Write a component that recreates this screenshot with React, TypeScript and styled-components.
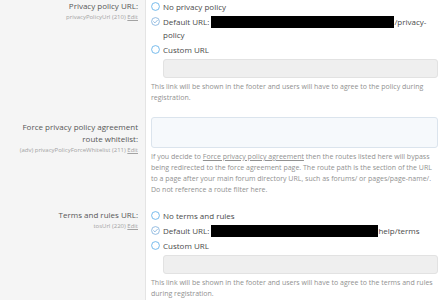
import styled, { createGlobalStyle } from "styled-components";

const GlobalStyle = createGlobalStyle`
html, body {
margin: 0;
padding: 0;
background: #fff;
}
body {
font-family: "Open Sans", "Noto Sans", sans-serif;
color: #444;
}
`;

const Page = styled.div`
width: 444px;
height: 300px;
overflow: hidden;
`;

const Row = styled.div`
display: grid;
grid-template-columns: 146px 1fr;
`;

const Term = styled.div<{ $first?: boolean; $offset?: number }>`
background: #f5f5f5;
border-right: 1px solid #e4e4e4;
padding: ${(p) => (p.$first ? 0 : 7) + (p.$offset || 0)}px 7px 7px 8px;
text-align: right;
`;

const Label = styled.div`
font-size: 8px;
line-height: 12px;
color: #575757;
`;

const Hint = styled.div`
font-size: 6px;
line-height: 10px;
color: #a3a3a3;
a {
color: inherit;
text-decoration: underline;
}
`;

const Desc = styled.div<{ $first?: boolean }>`
padding: ${(p) => (p.$first ? 0 : 7)}px 6px 7px 5px;
display: flex;
flex-direction: column;
`;

const RadioList = styled.div`
display: flex;
flex-direction: column;
gap: 2px;
`;

const RadioItem = styled.div`
display: flex;
align-items: flex-start;
gap: 3px;
font-size: 8px;
line-height: 13px;
color: #4a4a4a;
`;

const RadioIcon = styled.span`
flex: none;
width: 9px;
height: 13px;
display: flex;
align-items: center;
`;

const RadioText = styled.span`
flex: 1;
min-width: 0;
`;

const Redacted = styled.span<{ $w: number }>`
display: inline-block;
width: ${(p) => p.$w}px;
height: 12px;
background: #000;
vertical-align: -3px;
`;

const Indented = styled.div`
padding-left: 12px;
margin-top: 3px;
`;

const FieldInput = styled.div`
height: 19px;
box-sizing: border-box;
background: #efefef;
border: 1px solid #e2e2e2;
border-radius: 3px;
`;

const FieldArea = styled.div`
height: 31px;
box-sizing: border-box;
background: #f6f9fc;
border: 1px solid #dbe4ed;
border-radius: 3px;
`;

const Explain = styled.div`
margin-top: 3px;
font-size: 7px;
line-height: 11px;
color: #919191;
a {
color: inherit;
text-decoration: underline;
}
`;

const Radio = ({ checked }: { checked?: boolean }) => (
  <RadioIcon>
    {checked ? (
      <svg width="9" height="9" viewBox="0 0 18 18">
        <circle cx="9" cy="9" r="7.8" fill="none" stroke="#74a8d8" strokeWidth="1.5" />
        <path d="M5.3 9.3 L7.9 11.8 L12.8 6.6" fill="none" stroke="#74a8d8" strokeWidth="1.5" strokeLinecap="round" strokeLinejoin="round" />
      </svg>
    ) : (
      <svg width="9" height="9" viewBox="0 0 18 18">
        <circle cx="9" cy="9" r="7.8" fill="none" stroke="#4ba6e6" strokeWidth="1.5" />
      </svg>
    )}
  </RadioIcon>
);

type UrlOptionProps = {
  first?: boolean;
  label: string;
  hint: string;
  none: string;
  redactWidth: number;
  suffix: string;
  explain: string;
};

const UrlOption = (props: UrlOptionProps) => (
  <Row>
    <Term $first={props.first}>
      <Label>{props.label}</Label>
      <Hint>
        {props.hint} <a href="#">Edit</a>
      </Hint>
    </Term>
    <Desc $first={props.first}>
      <RadioList>
        <RadioItem>
          <Radio />
          <RadioText>{props.none}</RadioText>
        </RadioItem>
        <RadioItem>
          <Radio checked />
          <RadioText>
            Default URL: <Redacted $w={props.redactWidth} />
            {props.suffix}
          </RadioText>
        </RadioItem>
        <RadioItem>
          <Radio />
          <RadioText>Custom URL</RadioText>
        </RadioItem>
      </RadioList>
      <Indented>
        <FieldInput />
      </Indented>
      <Explain>{props.explain}</Explain>
    </Desc>
  </Row>
);

export default function App() {
  return (
    <Page>
      <GlobalStyle />
      <UrlOption
        first
        label="Privacy policy URL:"
        hint="privacyPolicyUrl (210)"
        none="No privacy policy"
        redactWidth={183}
        suffix="/privacy-policy"
        explain="This link will be shown in the footer and users will have to agree to the policy during registration."
      />
      <Row>
        <Term $offset={4}>
          <Label>Force privacy policy agreement route whitelist:</Label>
          <Hint>
            (adv) privacyPolicyForceWhitelist (211) <a href="#">Edit</a>
          </Hint>
        </Term>
        <Desc>
          <FieldArea />
          <Explain>
            If you decide to <a href="#">Force privacy policy agreement</a> then the routes listed here will
            bypass being redirected to the force agreement page. The route path is the section of the URL to a
            page after your main forum directory URL, such as forums/ or pages/page-name/. Do not reference a
            route filter here.
          </Explain>
        </Desc>
      </Row>
      <UrlOption
        label="Terms and rules URL:"
        hint="tosUrl (220)"
        none="No terms and rules"
        redactWidth={167}
        suffix="help/terms"
        explain="This link will be shown in the footer and users will have to agree to the terms and rules during registration."
      />
    </Page>
  );
}
